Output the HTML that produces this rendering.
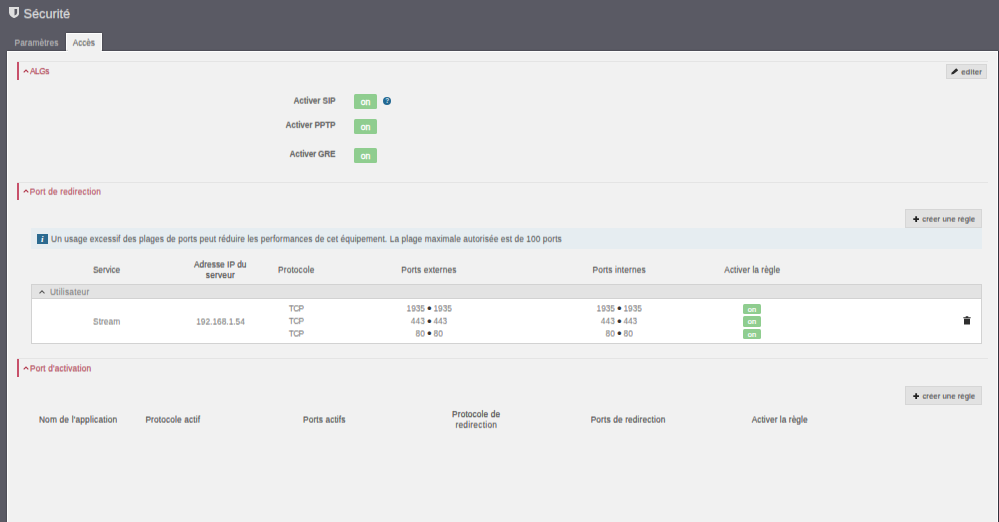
<!DOCTYPE html>
<html lang="fr"><head><meta charset="utf-8"><title>Sécurité</title>
<style>
*{box-sizing:border-box;margin:0;padding:0}
html,body{width:999px;height:522px;overflow:hidden}
body{background:#5a5a64;font-family:"Liberation Sans",sans-serif;font-size:8.3px;color:#444;position:relative}
.a,.t,svg{position:absolute}
.t{white-space:nowrap;line-height:12px;height:12px;-webkit-text-stroke-width:.22px}
.th{-webkit-text-stroke-width:.2px}.td{-webkit-text-stroke-width:.08px}
.hr{left:17px;width:971px;height:1px;background:#e4e4e4}
.bar{left:16.800px;width:2.100px;background:#c7506a}
.btn{background:#e2e2e2;border:1px solid #d6d6d6}.bt{-webkit-text-stroke-width:.15px}.lb{-webkit-text-stroke-width:0}
.on{background:#8fcd8f;color:#fff;text-align:center;border-radius:1.500px;white-space:nowrap}
.chev{fill:none;stroke-width:1.150}
</style></head><body>
<!-- header -->
<svg style="left:8.800px;top:6.900px" width="10.300" height="11.200" viewBox="0 0 10.3 11.2"><path d="M0 0H10.300V5.500C10.300 8.300 8 10 5.150 11.200C2.300 10 0 8.300 0 5.500Z" fill="#dedede"/><path d="M5.500 1.900H8.100V5.400C8.100 6.900 7 7.900 5.500 8.600Z" fill="#5a5a64"/></svg>
<div class="a" style="left:66.300px;top:33px;width:35.700px;height:19px;background:#f1f1f1;border:1.400px solid #fdfdfd;border-bottom:0;box-shadow:0 0 1.500px rgba(0,0,0,.45)"></div>
<div class="a" style="left:7.300px;top:51.200px;width:990.500px;height:480px;background:#f1f1f1;border:1.300px solid #fdfdfd;border-bottom:0;box-shadow:0 0 1.500px rgba(0,0,0,.45)"></div>
<div class="a" style="left:67.700px;top:49px;width:32.900px;height:4px;background:#f1f1f1"></div>
<div class="a" style="left:997.800px;top:50.500px;width:2px;height:472px;background:#32323d"></div>

<!-- ALGs -->
<div class="a hr" style="top:61px"></div>
<div class="a bar" style="top:62px;height:17.600px"></div>
<svg style="left:23px;top:68px" width="6" height="6" viewBox="0 0 6 6"><path class="chev" d="M0.700 4.300L3 2l2.300 2.300" stroke="#b23a4e"/></svg>
<div class="a btn" style="left:946px;top:64px;width:40.600px;height:15px"></div>
<svg style="left:950.800px;top:68px" width="7.600" height="6.800" viewBox="0 0 7.6 6.8"><path d="M0.200 6.600L0.800 4.400L5.200 0.300L7.400 2.300L2.600 6.100Z" fill="#2b2b2b"/></svg>
<div class="a on" style="left:354px;top:94px;width:23px;height:15px;line-height:17.800px;font-size:8.6px;-webkit-text-stroke:.3px #fff;overflow:hidden">on</div>
<div class="a" style="left:383.300px;top:96.600px;width:8px;height:8px;border-radius:50%;background:#226892;color:#d4e3ec;font-size:6.5px;line-height:8.600px;text-align:center;font-weight:bold">?</div>
<div class="a on" style="left:354px;top:119px;width:23px;height:15px;line-height:17.800px;font-size:8.6px;-webkit-text-stroke:.3px #fff;overflow:hidden">on</div>
<div class="a on" style="left:354px;top:148px;width:23px;height:15px;line-height:17.800px;font-size:8.6px;-webkit-text-stroke:.3px #fff;overflow:hidden">on</div>

<!-- Port de redirection -->
<div class="a hr" style="top:181.800px"></div>
<div class="a bar" style="top:182.500px;height:17.500px"></div>
<svg style="left:23px;top:188px" width="6" height="6" viewBox="0 0 6 6"><path class="chev" d="M0.700 4.300L3 2l2.300 2.300" stroke="#b23a4e"/></svg>
<div class="a btn" style="left:905px;top:209px;width:77px;height:19px"></div>
<svg style="left:912.700px;top:215.800px" width="6.300" height="6.300" viewBox="0 0 7 7"><path d="M2.500 0.300h2v2.200h2.200v2h-2.200v2.200h-2v-2.200h-2.200v-2h2.200z" fill="#222"/></svg>
<div class="a" style="left:31px;top:228px;width:951px;height:21px;background:#e6edf1"></div>
<div class="a" style="left:37px;top:234px;width:10.500px;height:10px;background:#2b6a90;color:#fff;font:italic bold 9px 'Liberation Serif',serif;line-height:10px;text-align:center">i</div>
<div class="a" style="left:31px;top:284px;width:951px;height:15px;background:#e3e3e3;border:1px solid #d2d2d2"></div>
<svg style="left:39px;top:288.500px" width="6" height="6" viewBox="0 0 6 6"><path class="chev" d="M0.500 4.300L3 1.900l2.500 2.400" stroke="#5c5c5c"/></svg>
<div class="a" style="left:31px;top:298px;width:951px;height:46px;background:#fff;border:1px solid #d2d2d2"></div>
<div class="a on" style="left:743px;top:303.500px;width:18px;height:10.500px;line-height:11.200px;font-size:7.5px;-webkit-text-stroke:.2px #fff;overflow:hidden">on</div>
<div class="a on" style="left:743px;top:316px;width:18px;height:10.500px;line-height:11.200px;font-size:7.5px;-webkit-text-stroke:.2px #fff;overflow:hidden">on</div>
<div class="a on" style="left:743px;top:328.500px;width:18px;height:10.500px;line-height:11.200px;font-size:7.5px;-webkit-text-stroke:.2px #fff;overflow:hidden">on</div>
<svg style="left:963px;top:316px" width="8" height="9" viewBox="0 0 8 9"><path d="M0.300 1.300h7.400v1h-7.400zM2.700 0.300h2.600v1h-2.600zM1 2.800h6v5.800h-6z" fill="#2e2e2e"/></svg>
<div class="t" style="left:427.3px;top:303.3px;font-size:12px;color:#333">•</div>
<div class="t" style="left:427.3px;top:315.8px;font-size:12px;color:#333">•</div>
<div class="t" style="left:427.3px;top:328.4px;font-size:12px;color:#333">•</div>
<div class="t" style="left:617.3px;top:303.3px;font-size:12px;color:#333">•</div>
<div class="t" style="left:617.3px;top:315.8px;font-size:12px;color:#333">•</div>
<div class="t" style="left:617.3px;top:328.4px;font-size:12px;color:#333">•</div>

<!-- Port d'activation -->
<div class="a hr" style="top:358.300px"></div>
<div class="a bar" style="top:359.400px;height:17.300px"></div>
<svg style="left:23px;top:365.200px" width="6" height="6" viewBox="0 0 6 6"><path class="chev" d="M0.700 4.300L3 2l2.300 2.300" stroke="#b23a4e"/></svg>
<div class="a btn" style="left:905px;top:386.200px;width:77px;height:18.700px"></div>
<svg style="left:912.700px;top:392.700px" width="6.300" height="6.300" viewBox="0 0 7 7"><path d="M2.500 0.300h2v2.200h2.200v2h-2.200v2.200h-2v-2.200h-2.200v-2h2.200z" fill="#222"/></svg>

<div class="t bt" style="left:23.4px;top:8px;font-size:12.8px;letter-spacing:-0.019px;color:rgba(240,240,240,0.74);text-shadow:0 -1px 0 rgba(240,240,240,0.10),0 1px 0 rgba(240,240,240,0.29);">Sécurité</div>
<div class="t" style="left:14.5px;top:36px;font-size:8.3px;letter-spacing:0.101px;color:rgba(205,205,205,0.30);text-shadow:0 1px 0 rgba(205,205,205,0.73),0 2px 0 rgba(205,205,205,0.09);">Paramètres</div>
<div class="t" style="left:72.8px;top:36px;font-size:8.3px;letter-spacing:-0.119px;color:rgba(72,72,72,0.30);text-shadow:0 1px 0 rgba(72,72,72,0.73),0 2px 0 rgba(72,72,72,0.09);">Accès</div>
<div class="t" style="left:30.0px;top:65px;font-size:8.3px;letter-spacing:-0.416px;color:rgba(173,53,74,0.73);text-shadow:0 -1px 0 rgba(173,53,74,0.08),0 1px 0 rgba(173,53,74,0.30);">ALGs</div>
<div class="t bt" style="left:961.3px;top:66px;font-size:7.8px;letter-spacing:0.231px;color:rgba(56,56,56,0.56);text-shadow:0 1px 0 rgba(56,56,56,0.56);">editer</div>
<div class="t lb" style="left:293.4px;top:94px;font-size:8.3px;letter-spacing:-0.165px;color:rgba(76,76,76,0.48);text-shadow:0 1px 0 rgba(76,76,76,0.64);font-weight:700;">Activer SIP</div>
<div class="t lb" style="left:285.4px;top:118px;font-size:8.3px;letter-spacing:-0.176px;color:rgba(76,76,76,0.27);text-shadow:0 1px 0 rgba(76,76,76,0.74),0 2px 0 rgba(76,76,76,0.11);font-weight:700;">Activer PPTP</div>
<div class="t lb" style="left:289.5px;top:147px;font-size:8.3px;letter-spacing:-0.229px;color:rgba(76,76,76,0.25);text-shadow:0 1px 0 rgba(76,76,76,0.75),0 2px 0 rgba(76,76,76,0.12);font-weight:700;">Activer GRE</div>
<div class="t" style="left:29.8px;top:185px;font-size:8.3px;letter-spacing:0.179px;color:rgba(173,53,74,0.36);text-shadow:0 1px 0 rgba(173,53,74,0.72),0 2px 0 rgba(173,53,74,0.05);">Port de redirection</div>
<div class="t bt" style="left:922.3px;top:213px;font-size:7.8px;letter-spacing:0.030px;color:rgba(51,51,51,0.49);text-shadow:0 1px 0 rgba(51,51,51,0.63);">créer une règle</div>
<div class="t" style="left:51.1px;top:232px;font-size:8.3px;letter-spacing:0.096px;color:rgba(68,68,68,0.20);text-shadow:0 1px 0 rgba(68,68,68,0.76),0 2px 0 rgba(68,68,68,0.16);">Un usage excessif des plages de ports peut réduire les performances de cet équipement. La plage maximale autorisée est de 100 ports</div>
<div class="t th" style="left:92.9px;top:263px;font-size:8.3px;letter-spacing:-0.053px;color:rgba(51,51,51,0.27);text-shadow:0 1px 0 rgba(51,51,51,0.74),0 2px 0 rgba(51,51,51,0.11);">Service</div>
<div class="t th" style="left:194.0px;top:258px;font-size:8.3px;letter-spacing:0.041px;color:rgba(51,51,51,0.51);text-shadow:0 1px 0 rgba(51,51,51,0.61);">Adresse IP du</div>
<div class="t th" style="left:205.8px;top:269px;font-size:8.3px;letter-spacing:0.218px;color:rgba(51,51,51,0.76);text-shadow:0 -1px 0 rgba(51,51,51,0.15),0 1px 0 rgba(51,51,51,0.21);">serveur</div>
<div class="t th" style="left:278.1px;top:263px;font-size:8.3px;letter-spacing:0.137px;color:rgba(51,51,51,0.27);text-shadow:0 1px 0 rgba(51,51,51,0.74),0 2px 0 rgba(51,51,51,0.11);">Protocole</div>
<div class="t th" style="left:401.3px;top:263px;font-size:8.3px;letter-spacing:0.121px;color:rgba(51,51,51,0.27);text-shadow:0 1px 0 rgba(51,51,51,0.74),0 2px 0 rgba(51,51,51,0.11);">Ports externes</div>
<div class="t th" style="left:592.5px;top:263px;font-size:8.3px;letter-spacing:0.151px;color:rgba(51,51,51,0.27);text-shadow:0 1px 0 rgba(51,51,51,0.74),0 2px 0 rgba(51,51,51,0.11);">Ports internes</div>
<div class="t th" style="left:724.3px;top:263px;font-size:8.3px;letter-spacing:0.058px;color:rgba(51,51,51,0.27);text-shadow:0 1px 0 rgba(51,51,51,0.74),0 2px 0 rgba(51,51,51,0.11);">Activer la règle</div>
<div class="t td" style="left:49.9px;top:285px;font-size:8.3px;letter-spacing:0.237px;color:rgba(106,106,106,0.23);text-shadow:0 1px 0 rgba(106,106,106,0.75),0 2px 0 rgba(106,106,106,0.14);">Utilisateur</div>
<div class="t td" style="left:93.1px;top:315px;font-size:8.3px;letter-spacing:0.042px;color:rgba(106,106,106,0.51);text-shadow:0 1px 0 rgba(106,106,106,0.61);">Stream</div>
<div class="t td" style="left:196.2px;top:315px;font-size:8.3px;letter-spacing:0.021px;color:rgba(106,106,106,0.51);text-shadow:0 1px 0 rgba(106,106,106,0.61);">192.168.1.54</div>
<div class="t td" style="left:288.7px;top:302px;font-size:8.3px;letter-spacing:-0.570px;color:rgba(106,106,106,0.65);text-shadow:0 1px 0 rgba(106,106,106,0.47);">TCP</div>
<div class="t td" style="left:288.7px;top:314px;font-size:8.3px;letter-spacing:-0.570px;color:rgba(106,106,106,0.23);text-shadow:0 1px 0 rgba(106,106,106,0.75),0 2px 0 rgba(106,106,106,0.14);">TCP</div>
<div class="t td" style="left:288.7px;top:327px;font-size:8.3px;letter-spacing:-0.570px;color:rgba(106,106,106,0.56);text-shadow:0 1px 0 rgba(106,106,106,0.56);">TCP</div>
<div class="t" style="left:30.0px;top:362px;font-size:8.3px;letter-spacing:0.142px;color:rgba(173,53,74,0.56);text-shadow:0 1px 0 rgba(173,53,74,0.56);">Port d'activation</div>
<div class="t bt" style="left:922.4px;top:390px;font-size:7.8px;letter-spacing:0.023px;color:rgba(51,51,51,0.42);text-shadow:0 1px 0 rgba(51,51,51,0.70);">créer une règle</div>
<div class="t th" style="left:38.9px;top:413px;font-size:8.3px;letter-spacing:0.202px;color:rgba(51,51,51,0.42);text-shadow:0 1px 0 rgba(51,51,51,0.70);">Nom de l'application</div>
<div class="t th" style="left:145.4px;top:413px;font-size:8.3px;letter-spacing:0.141px;color:rgba(51,51,51,0.42);text-shadow:0 1px 0 rgba(51,51,51,0.70);">Protocole actif</div>
<div class="t th" style="left:303.0px;top:413px;font-size:8.3px;letter-spacing:0.121px;color:rgba(51,51,51,0.42);text-shadow:0 1px 0 rgba(51,51,51,0.70);">Ports actifs</div>
<div class="t th" style="left:452.1px;top:408px;font-size:8.3px;letter-spacing:0.126px;color:rgba(51,51,51,0.72);text-shadow:0 -1px 0 rgba(51,51,51,0.07),0 1px 0 rgba(51,51,51,0.33);">Protocole de</div>
<div class="t th" style="left:455.4px;top:418px;font-size:8.3px;letter-spacing:0.277px;color:rgba(51,51,51,0.25);text-shadow:0 1px 0 rgba(51,51,51,0.75),0 2px 0 rgba(51,51,51,0.12);">redirection</div>
<div class="t th" style="left:590.7px;top:413px;font-size:8.3px;letter-spacing:0.142px;color:rgba(51,51,51,0.42);text-shadow:0 1px 0 rgba(51,51,51,0.70);">Ports de redirection</div>
<div class="t th" style="left:751.7px;top:413px;font-size:8.3px;letter-spacing:0.064px;color:rgba(51,51,51,0.42);text-shadow:0 1px 0 rgba(51,51,51,0.70);">Activer la règle</div>
<div class="t td" style="left:406.6px;top:302px;font-size:8.3px;letter-spacing:-0.042px;color:rgba(106,106,106,0.65);text-shadow:0 1px 0 rgba(106,106,106,0.47);">1935</div>
<div class="t td" style="left:433.6px;top:302px;font-size:8.3px;letter-spacing:-0.092px;color:rgba(106,106,106,0.65);text-shadow:0 1px 0 rgba(106,106,106,0.47);">1935</div>
<div class="t td" style="left:410.8px;top:314px;font-size:8.3px;letter-spacing:0.085px;color:rgba(106,106,106,0.23);text-shadow:0 1px 0 rgba(106,106,106,0.75),0 2px 0 rgba(106,106,106,0.14);">443</div>
<div class="t td" style="left:433.6px;top:314px;font-size:8.3px;letter-spacing:-0.181px;color:rgba(106,106,106,0.23);text-shadow:0 1px 0 rgba(106,106,106,0.75),0 2px 0 rgba(106,106,106,0.14);">443</div>
<div class="t td" style="left:415.6px;top:327px;font-size:8.3px;letter-spacing:0.033px;color:rgba(106,106,106,0.56);text-shadow:0 1px 0 rgba(106,106,106,0.56);">80</div>
<div class="t td" style="left:433.6px;top:327px;font-size:8.3px;letter-spacing:-0.067px;color:rgba(106,106,106,0.56);text-shadow:0 1px 0 rgba(106,106,106,0.56);">80</div>
<div class="t td" style="left:596.6px;top:302px;font-size:8.3px;letter-spacing:-0.042px;color:rgba(106,106,106,0.65);text-shadow:0 1px 0 rgba(106,106,106,0.47);">1935</div>
<div class="t td" style="left:623.6px;top:302px;font-size:8.3px;letter-spacing:-0.092px;color:rgba(106,106,106,0.65);text-shadow:0 1px 0 rgba(106,106,106,0.47);">1935</div>
<div class="t td" style="left:600.8px;top:314px;font-size:8.3px;letter-spacing:0.085px;color:rgba(106,106,106,0.23);text-shadow:0 1px 0 rgba(106,106,106,0.75),0 2px 0 rgba(106,106,106,0.14);">443</div>
<div class="t td" style="left:623.6px;top:314px;font-size:8.3px;letter-spacing:-0.181px;color:rgba(106,106,106,0.23);text-shadow:0 1px 0 rgba(106,106,106,0.75),0 2px 0 rgba(106,106,106,0.14);">443</div>
<div class="t td" style="left:605.6px;top:327px;font-size:8.3px;letter-spacing:0.033px;color:rgba(106,106,106,0.56);text-shadow:0 1px 0 rgba(106,106,106,0.56);">80</div>
<div class="t td" style="left:623.6px;top:327px;font-size:8.3px;letter-spacing:-0.067px;color:rgba(106,106,106,0.56);text-shadow:0 1px 0 rgba(106,106,106,0.56);">80</div>
</body></html>
